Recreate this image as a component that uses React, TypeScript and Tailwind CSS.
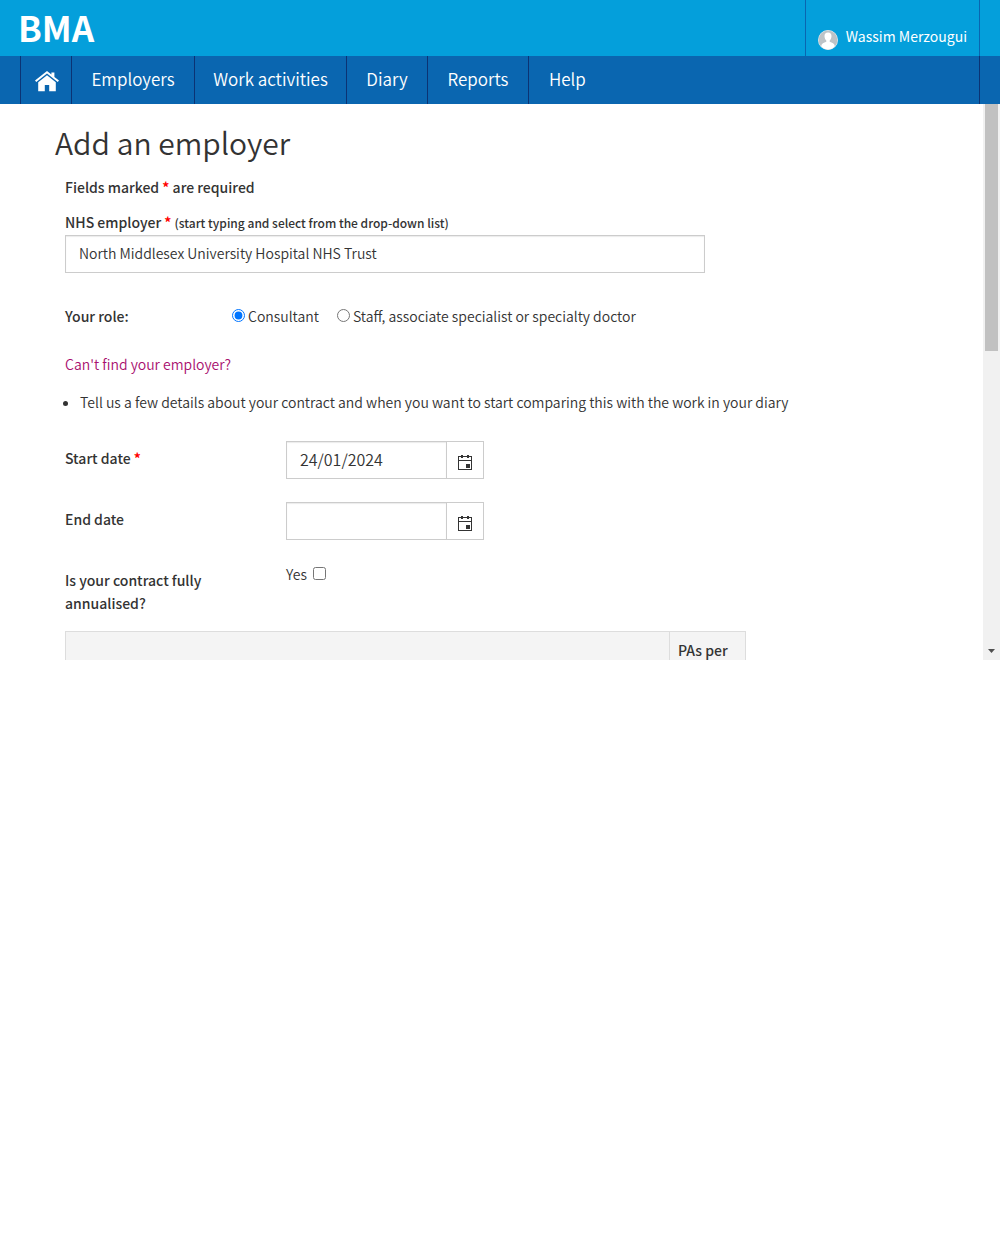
import React, { useState } from "react";

const navItems = [
  { label: "Employers", width: "w-[123px]" },
  { label: "Work activities", width: "w-[152px]" },
  { label: "Diary", width: "w-[81px]" },
  { label: "Reports", width: "w-[101px]" },
];

function HomeIcon() {
  return (
    <svg width="24" height="21" viewBox="0 0 24 21" fill="#fff" aria-hidden="true">
      <path d="M12 0 0 9.6l1.300 1.500L12 2.500l10.700 8.600L24 9.600l-4.600-3.700V1.600h-3v2z" />
      <path d="M12 4.200 3.200 11.300V20.300h6.600V14h4.400v6.300h6.600v-9z" />
    </svg>
  );
}

function Avatar() {
  return (
    <svg width="20" height="20" viewBox="0 0 20 20" aria-hidden="true">
      <defs>
        <clipPath id="avatar-disc">
          <circle cx="10" cy="10" r="9.4" />
        </clipPath>
      </defs>
      <circle cx="10" cy="10" r="10" fill="#e9edef" />
      <g clipPath="url(#avatar-disc)">
        <rect width="20" height="20" fill="#bdc3c7" />
        <path
          fill="#fff"
          d="M10 2.400c-2.400 0-3.600 1.500-3.500 3.800.1 1.900.8 3.500 1.800 4.300v1.300c-2.600.8-4.600 1.700-5 4V20h13.400v-4.200c-.4-2.300-2.400-3.200-5-4v-1.300c1-.8 1.700-2.400 1.800-4.300.1-2.300-1.100-3.800-3.500-3.800z"
        />
      </g>
    </svg>
  );
}

function CalendarIcon() {
  return (
    <svg width="14" height="15" viewBox="0 0 14 15" fill="none" aria-hidden="true" shapeRendering="crispEdges">
      <path d="M.5 1.500h13v13H.5zM.5 5.500h13" stroke="#333" />
      <path d="M3 0h2v3H3zM9 0h2v3H9zM8 9h4v4H8z" fill="#333" />
    </svg>
  );
}

function Star() {
  return <span className="font-bold text-[#f00]">*</span>;
}

function DateField({ id, label, required, initial }: { id: string; label: string; required?: boolean; initial: string }) {
  const [value, setValue] = useState(initial);
  return (
    <div className="flex h-[38px]">
      <label htmlFor={id} className="w-[221px] pt-[6px] font-medium">
        {label} {required && <Star />}
      </label>
      <div className="flex w-[198px] border border-[#ccc]">
        <input
          id={id}
          value={value}
          onChange={(e) => setValue(e.target.value)}
          className="w-[159px] px-[13px] pb-[3px] text-base shadow-[inset_0_1px_1px_rgba(0,0,0,0.08)] outline-none"
        />
        <button
          type="button"
          aria-label={`Choose ${label.toLowerCase()}`}
          className="flex flex-1 items-center justify-center border-l border-[#ccc] pt-1"
        >
          <CalendarIcon />
        </button>
      </div>
    </div>
  );
}

export default function App() {
  const [employer, setEmployer] = useState("North Middlesex University Hospital NHS Trust");
  return (
    <div className="bg-white font-['Noto_Sans_CJK_SC',sans-serif] text-[14px] leading-[23px] font-[350] text-[#333]">
      <header className="flex h-14 justify-between bg-[#049fdb] text-white">
        <a href="#home" className="pl-[18px] text-[35px] leading-[54px] font-bold">
          BMA
        </a>
        <div className="mr-5 flex border-x border-[#0a66b0]">
          <a href="#account" className="flex items-start gap-2 pr-3 pl-3">
            <span className="pt-[30px]">
              <Avatar />
            </span>
            <span className="pt-6 text-[14px] leading-6 font-normal">Wassim Merzougui</span>
          </a>
        </div>
      </header>
      <nav className="flex h-12 bg-[#0a66b0] px-5 text-[17px] leading-[45px] text-white">
        <a
          href="#home"
          aria-label="Home"
          className="flex w-[52px] items-center justify-center border-x border-[#0b3374] pt-[2px] pl-px"
        >
          <HomeIcon />
        </a>
        {navItems.map((item) => (
          <a key={item.label} href="#nav" className={`${item.width} border-r border-[#0b3374] text-center`}>
            {item.label}
          </a>
        ))}
        <a href="#help" className="flex-1 border-r border-[#0b3374] pl-5">
          Help
        </a>
      </nav>
      <div className="flex h-[556px] overflow-hidden">
        <main className="flex-1 pl-[55px]">
          <h1 className="mt-[18px] text-[30px] leading-10 font-[350]">Add an employer</h1>
          <form className="pl-[10px]">
            <p className="mt-[14px] font-medium">
              Fields marked <Star /> are required
            </p>
            <label htmlFor="employer" className="mt-3 block font-medium">
              NHS employer <Star /> <span className="text-[12px]">(start typing and select from the drop-down list)</span>
            </label>
            <input
              id="employer"
              value={employer}
              onChange={(e) => setEmployer(e.target.value)}
              className="mt-px block h-[38px] w-[640px] border border-[#ccc] px-[13px] pb-[3px] shadow-[inset_0_1px_1px_rgba(0,0,0,0.08)] outline-none"
            />
            <fieldset className="mt-8 flex">
              <legend className="float-left w-[167px] font-medium">Your role:</legend>
              <label className="mr-[18px] flex gap-[3px]">
                <input type="radio" name="role" defaultChecked className="mt-1 size-[13px]" />
                Consultant
              </label>
              <label className="flex gap-[3px]">
                <input type="radio" name="role" className="mt-1 size-[13px]" />
                Staff, associate specialist or specialty doctor
              </label>
            </fieldset>
            <a href="#find" className="mt-[25px] block text-[#a9106f]">
              Can't find your employer?
            </a>
            <ul className="mt-[15px] list-disc pl-[15px]">
              <li>Tell us a few details about your contract and when you want to start comparing this with the work in your diary</li>
            </ul>
            <div className="mt-[27px]">
              <DateField id="start" label="Start date" required initial="24/01/2024" />
            </div>
            <div className="mt-[23px]">
              <DateField id="end" label="End date" initial="" />
            </div>
            <div className="mt-[23px] flex">
              <label htmlFor="annualised" className="w-[221px] pt-[6px] pr-16 font-medium">
                Is your contract fully annualised?
              </label>
              <label className="flex gap-[6px]">
                Yes
                <input id="annualised" type="checkbox" className="mt-1 size-[13px]" />
              </label>
            </div>
            <table className="mt-4 w-[681px] border-collapse bg-[#f4f4f4]">
              <thead>
                <tr className="align-top">
                  <th className="border border-[#ddd]"></th>
                  <th className="w-[76px] border border-[#ddd] px-2 pt-[7px] pb-2 text-left font-medium">PAs per</th>
                </tr>
              </thead>
            </table>
          </form>
        </main>
        <div className="flex w-[17px] flex-col items-center justify-between bg-[#f1f1f1]">
          <div className="h-[247px] w-[13px] bg-[#c1c1c1]" />
          <svg width="7" height="4" viewBox="0 0 7 4" className="mb-[7px]" aria-hidden="true">
            <path d="M0 0h7L3.500 4z" fill="#505050" />
          </svg>
        </div>
      </div>
    </div>
  );
}
